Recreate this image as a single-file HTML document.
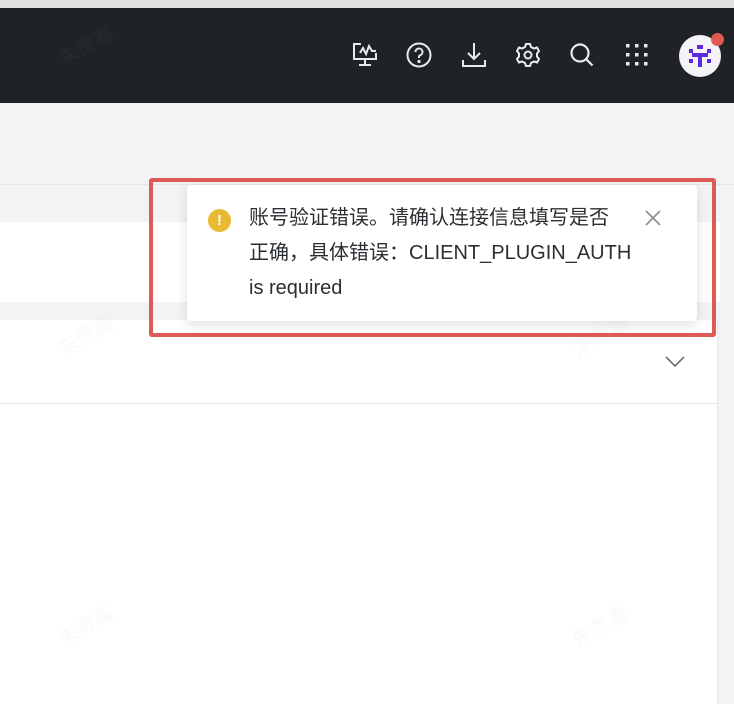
<!DOCTYPE html>
<html><head><meta charset="utf-8"><style>
*{margin:0;padding:0;box-sizing:border-box}
body{width:734px;height:704px;overflow:hidden;background:#f2f3f5;position:relative;font-family:"Liberation Sans","Noto Sans CJK SC",sans-serif}
.top{position:absolute;left:0;top:0;width:734px;height:8px;background:#e2e2e2}
.hdr{position:absolute;left:0;top:8px;width:734px;height:95px;background:#202326}
.ic{position:absolute;top:41px}
.line1{position:absolute;left:0;top:184px;width:734px;height:1px;background:#e3e5e8}
.row{position:absolute;left:0;top:222px;width:720px;height:80px;background:#fff}
.panel{position:absolute;left:0;top:320px;width:718px;height:384px;background:#fff;border-right:1px solid #e3e5e8}
.pl{position:absolute;left:0;top:403px;width:718px;height:1px;background:#e6e7ea}
.red{position:absolute;left:149px;top:178px;width:567px;height:159px;border:4px solid #e05a55;border-radius:3px}
.toast{position:absolute;left:187px;top:185px;width:510px;height:136px;background:#fff;border-radius:4px;box-shadow:0 4px 12px rgba(0,0,0,.12)}
.warn{position:absolute;left:208px;top:209px;width:23px;height:23px;border-radius:50%;background:#e8b931;color:#fff;font-size:15px;font-weight:bold;text-align:center;line-height:23px}
.txt{position:absolute;left:249px;top:201px;width:420px;font-size:20px;line-height:35px;color:#2b2f33;white-space:nowrap}
.wm{position:absolute;color:rgba(150,150,150,.06);font-size:20px;transform:rotate(-30deg);font-family:"Noto Sans CJK SC",sans-serif}
</style></head><body>
<div class="top"></div>
<div class="hdr"></div>
<svg class="ic" style="left:351px" width="28" height="28" viewBox="0 0 28 28" fill="none" stroke="#e8eaec" stroke-width="2"><path d="M10 3H3v15h22v-6"/><path d="M9 12l3-5 3 6 3-8 3 5h4"/><path d="M14 18v5M8 24h12"/></svg>
<svg class="ic" style="left:405px" width="28" height="28" viewBox="0 0 28 28" fill="none" stroke="#e8eaec" stroke-width="2"><circle cx="14" cy="14" r="11.5"/><path d="M10.5 11a3.5 3.5 0 1 1 4.5 3.3c-.8.3-1 .9-1 1.7v1"/><circle cx="14" cy="20.5" r=".6" fill="#e8eaec"/></svg>
<svg class="ic" style="left:460px" width="28" height="28" viewBox="0 0 28 28" fill="none" stroke="#e8eaec" stroke-width="2"><path d="M14 2v16M8 12l6 6 6-6"/><path d="M3 19v6h22v-6"/></svg>
<svg class="ic" style="left:514px" width="28" height="28" viewBox="0 0 28 28" fill="none" stroke="#e8eaec" stroke-width="2"><path d="M12 3h4l1 3 3 1.5 3-1 2 3.5-2 2.5v3l2 2.5-2 3.5-3-1-3 1.5-1 3h-4l-1-3-3-1.5-3 1-2-3.5 2-2.5v-3l-2-2.5 2-3.5 3 1 3-1.5z"/><circle cx="14" cy="14" r="3.5"/></svg>
<svg class="ic" style="left:568px" width="28" height="28" viewBox="0 0 28 28" fill="none" stroke="#e8eaec" stroke-width="2.2"><circle cx="12" cy="12" r="8.5"/><path d="M18.5 18.5l6 6"/></svg>
<svg class="ic" style="left:623px" width="28" height="28" viewBox="0 0 28 28" fill="#e8eaec"><rect x="3" y="3" width="3.5" height="3.5"/><rect x="12" y="3" width="3.5" height="3.5"/><rect x="21" y="3" width="3.5" height="3.5"/><rect x="3" y="12" width="3.5" height="3.5"/><rect x="12" y="12" width="3.5" height="3.5"/><rect x="21" y="12" width="3.5" height="3.5"/><rect x="3" y="21" width="3.5" height="3.5"/><rect x="12" y="21" width="3.5" height="3.5"/><rect x="21" y="21" width="3.5" height="3.5"/></svg>
<div style="position:absolute;left:679px;top:35px;width:42px;height:42px;border-radius:50%;background:#f4f4f6"></div>
<svg style="position:absolute;left:679px;top:35px" width="42" height="42" viewBox="0 0 42 42" fill="#5a2be0"><rect x="18" y="10" width="6" height="4"/><rect x="10" y="14" width="4" height="4"/><rect x="28" y="14" width="4" height="4"/><rect x="13" y="18" width="16" height="4"/><rect x="19" y="22" width="4" height="10"/><rect x="10" y="24" width="4" height="4"/><rect x="28" y="24" width="4" height="4"/></svg>
<div style="position:absolute;left:711px;top:33px;width:13px;height:13px;border-radius:50%;background:#e05a4f"></div>
<div class="line1"></div>
<div class="row"></div>
<div class="panel"></div>
<div class="pl"></div>
<svg style="position:absolute;left:664px;top:354px" width="22" height="14" viewBox="0 0 22 14" fill="none" stroke="#6b7075" stroke-width="1.6"><path d="M2 3l9 9 9-9"/></svg>
<div class="wm" style="left:55px;top:30px">朱贵鑫</div>
<div class="wm" style="left:55px;top:320px">朱贵鑫</div>
<div class="wm" style="left:55px;top:610px">朱贵鑫</div>
<div class="wm" style="left:570px;top:320px">朱贵鑫</div>
<div class="wm" style="left:570px;top:610px">朱贵鑫</div>
<div class="red"></div>
<div class="toast"></div>
<div class="warn">!</div>
<div class="txt">账号验证错误。请确认连接信息填写是否<br>正确，具体错误：CLIENT_PLUGIN_AUTH<br>is required</div>
<svg style="position:absolute;left:644px;top:209px" width="18" height="18" viewBox="0 0 18 18" stroke="#8a8e93" stroke-width="1.6"><path d="M2 2l14 14M16 2L2 16"/></svg>
</body></html>
